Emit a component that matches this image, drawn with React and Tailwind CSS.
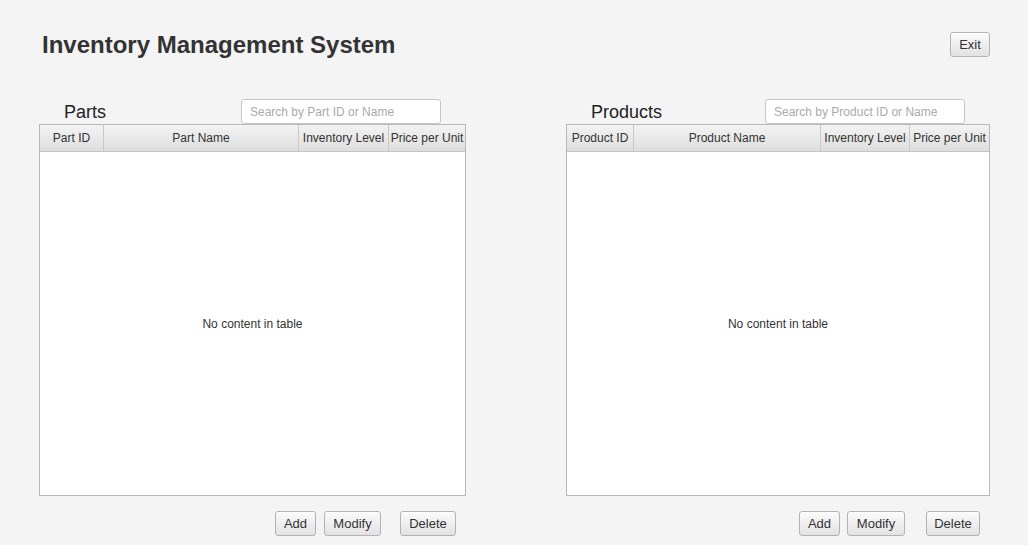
import React from 'react';

const partCols = [
  { label: 'Part ID', w: 'w-[64px]' },
  { label: 'Part Name', w: 'w-[195px]' },
  { label: 'Inventory Level', w: 'w-[90px]' },
  { label: 'Price per Unit', w: 'flex-1' },
];

const productCols = [
  { label: 'Product ID', w: 'w-[67px]' },
  { label: 'Product Name', w: 'w-[187px]' },
  { label: 'Inventory Level', w: 'w-[89px]' },
  { label: 'Price per Unit', w: 'flex-1' },
];

const FxButton = ({ children, className = '' }) => (
  <button
    className={`h-[25px] rounded-[3px] border border-[#b3b3b3] bg-gradient-to-b from-[#fbfbfb] to-[#e2e2e2] text-[13px] text-[#333] leading-none shadow-[inset_0_1px_0_#ffffff] ${className}`}
  >
    {children}
  </button>
);

const Panel = ({ title, placeholder, labelW, cols, width, buttons }) => (
  <div className={`flex flex-col ${width}`}>
    <div className="flex items-center h-[25px]">
      <div className={`${labelW} pl-[25px] text-[18px] text-[#222] leading-none`}>{title}</div>
      <input
        placeholder={placeholder}
        className="w-[200px] h-[25px] rounded-[3px] border border-[#c6c6c6] bg-white px-[8px] text-[12px] text-[#333] placeholder:text-[#aaaaaa] outline-none"
      />
    </div>
    <div className="h-[372px] border border-[#b8b8b8] bg-white flex flex-col">
      <div className="flex h-[27px] border-b border-[#c4c4c4] bg-gradient-to-b from-[#f3f3f3] to-[#dedede]">
        {cols.map((c, i) => (
          <div
            key={c.label}
            className={`${c.w} flex items-center justify-center text-[12px] text-[#333] whitespace-nowrap overflow-hidden ${
              i < cols.length - 1 ? 'border-r border-[#c8c8c8]' : ''
            }`}
          >
            {c.label}
          </div>
        ))}
      </div>
      <div className="flex-1 flex items-center justify-center text-[12px] text-[#333]">
        No content in table
      </div>
    </div>
    <div className="flex justify-end pr-[10px] mt-[15px]">{buttons}</div>
  </div>
);

export default function App() {
  return (
    <div
      className="w-[1028px] h-[545px] bg-[#f4f4f4] flex flex-col overflow-hidden"
      style={{ fontFamily: '"Liberation Sans", Arial, sans-serif' }}
    >
      <div className="flex items-center justify-between h-[25px] mt-[32px] pl-[42px] pr-[38px]">
        <h1 className="text-[24px] font-bold text-[#333] leading-none">Inventory Management System</h1>
        <FxButton className="w-[40px]">Exit</FxButton>
      </div>

      <div className="flex justify-between mt-[42px] pl-[39px] pr-[38px]">
        <Panel
          title="Parts"
          placeholder="Search by Part ID or Name"
          labelW="w-[202px]"
          cols={partCols}
          width="w-[427px]"
          buttons={
            <>
              <FxButton className="w-[41px]">Add</FxButton>
              <FxButton className="w-[57px] ml-[8px]">Modify</FxButton>
              <FxButton className="w-[56px] ml-[19px]">Delete</FxButton>
            </>
          }
        />
        <Panel
          title="Products"
          placeholder="Search by Product ID or Name"
          labelW="w-[199px]"
          cols={productCols}
          width="w-[424px]"
          buttons={
            <>
              <FxButton className="w-[41px]">Add</FxButton>
              <FxButton className="w-[58px] ml-[7px]">Modify</FxButton>
              <FxButton className="w-[54px] ml-[21px]">Delete</FxButton>
            </>
          }
        />
      </div>
    </div>
  );
}
